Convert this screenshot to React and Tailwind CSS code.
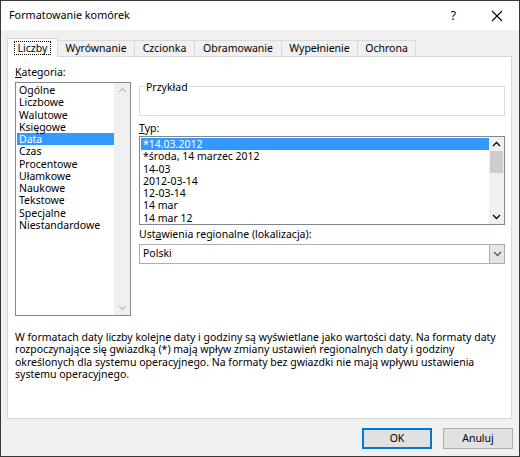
import React from 'react';

const categories = [
  'Ogólne', 'Liczbowe', 'Walutowe', 'Księgowe', 'Data', 'Czas',
  'Procentowe', 'Ułamkowe', 'Naukowe', 'Tekstowe', 'Specjalne', 'Niestandardowe',
];

const types = [
  '*14.03.2012', '*środa, 14 marzec 2012', '14-03', '2012-03-14', '12-03-14', '14 mar', '14 mar 12',
];

const tabs = ['Wyrównanie', 'Czcionka', 'Obramowanie', 'Wypełnienie', 'Ochrona'];
const tabWidths = ['w-[77px]', 'w-[60px]', 'w-[87px]', 'w-[76px]', 'w-[58px]'];

function Chevron({ up, color = '#000' }) {
  return (
    <svg width="9" height="6" viewBox="0 0 9 6">
      <path d={up ? 'M1 5 L4.5 1.5 L8 5' : 'M1 1 L4.5 4.5 L8 1'} fill="none" stroke={color} strokeWidth="1.3" />
    </svg>
  );
}

export default function App() {
  return (
    <div
      className="w-[520px] h-[457px] border border-[#383838] bg-[#f0f0f0] flex flex-col text-[10.5px] text-black overflow-hidden"
      style={{ fontFamily: '"Noto Sans", "Open Sans", sans-serif' }}
    >
      {/* title bar */}
      <div className="h-[29px] bg-white flex items-center shrink-0">
        <span className="ml-[8px] text-[10.8px]">Formatowanie komórek</span>
        <span className="ml-auto mr-[35px] text-[12px]">?</span>
        <svg width="12" height="12" viewBox="0 0 12 12" className="mr-[16px]">
          <path d="M1 1 L11 11 M11 1 L1 11" stroke="#000" strokeWidth="1.1" />
        </svg>
      </div>

      {/* tabs */}
      <div className="flex items-end pl-[6px] mt-[8px] h-[18px] relative z-10">
        <div className="w-[51px] h-[19px] -mb-px bg-white border border-b-0 border-[#d9d9d9] flex items-center justify-center">
          <span className="border border-dotted border-black px-[3px] leading-[12px]">Liczby</span>
        </div>
        {tabs.map((t, i) => (
          <div
            key={t}
            className={`${tabWidths[i]} h-[16px] bg-[#f0f0f0] border border-b-0 border-l-0 border-[#d9d9d9] flex items-center justify-center`}
          >
            {t}
          </div>
        ))}
      </div>

      {/* panel */}
      <div className="mx-[6px] w-[505px] h-[363px] bg-white border border-[#d9d9d9] flex flex-col">
        <div className="flex pl-[7px] pt-[8px]">
          {/* left column */}
          <div className="w-[116px] flex flex-col">
            <div className="leading-[14px]"><u>K</u>ategoria:</div>
            <div className="mt-[3px] h-[234px] border border-[#828790] flex">
              <div className="flex-1 pt-[1px] pl-px">
                {categories.map((c) => (
                  <div
                    key={c}
                    className={`h-[12.25px] leading-[12.25px] pl-[2px] ${c === 'Data' ? 'bg-[#3399ff] text-white' : ''}`}
                  >
                    {c}
                  </div>
                ))}
              </div>
              <div className="w-[16px] bg-[#f0f0f0] flex flex-col items-center justify-between py-[4px]">
                <Chevron up color="#c0c0c0" />
                <Chevron color="#c0c0c0" />
              </div>
            </div>
          </div>

          {/* right column */}
          <div className="ml-[8px] w-[366px] flex flex-col">
            <div className="relative mt-[21px] h-[30px] border border-[#dcdcdc]">
              <span className="absolute left-[5px] -top-[7px] bg-white px-[1px] leading-[14px]">Przykład</span>
            </div>
            <div className="mt-[5px] leading-[14px]"><u>T</u>yp:</div>
            <div className="mt-[1px] h-[89px] border border-[#828790] flex">
              <div className="flex-1 pt-[1px] pl-px">
                {types.map((t, i) => (
                  <div
                    key={t}
                    className={`h-[12.25px] leading-[12.25px] pl-[2px] ${i === 0 ? 'bg-[#3399ff] text-white' : ''}`}
                  >
                    {t}
                  </div>
                ))}
              </div>
              <div className="w-[15px] bg-[#f0f0f0] flex flex-col items-center py-[4px]">
                <Chevron up />
                <div className="mt-[4px] w-[13px] h-[22px] bg-[#cdcdcd]" />
                <div className="flex-1" />
                <Chevron />
              </div>
            </div>
            <div className="mt-[2px] leading-[14px]">Ust<u>a</u>wienia regionalne (lokalizacja):</div>
            <div className="mt-[3px] h-[20px] border border-[#adadad] flex items-center">
              <span className="pl-[3px] flex-1">Polski</span>
              <div className="w-[15px] h-full bg-[#e5e5e5] border-l border-[#adadad] flex items-center justify-center">
                <Chevron color="#555" />
              </div>
            </div>
          </div>
        </div>

        <p className="mt-[15px] pl-[7px] leading-[12.3px]">
          W formatach daty liczby kolejne daty i godziny są wyświetlane jako wartości daty. Na formaty daty<br />
          rozpoczynające się gwiazdką (*) mają wpływ zmiany ustawień regionalnych daty i godziny<br />
          określonych dla systemu operacyjnego. Na formaty bez gwiazdki nie mają wpływu ustawienia<br />
          systemu operacyjnego.
        </p>
      </div>

      {/* buttons */}
      <div className="flex justify-end gap-[11px] mt-[9px] pr-[6px]">
        <button className="w-[70px] h-[21px] bg-[#e1e1e1] border-2 border-[#0078d7] leading-none">OK</button>
        <button className="w-[70px] h-[21px] bg-[#e1e1e1] border border-[#adadad] leading-none">Anuluj</button>
      </div>
    </div>
  );
}
